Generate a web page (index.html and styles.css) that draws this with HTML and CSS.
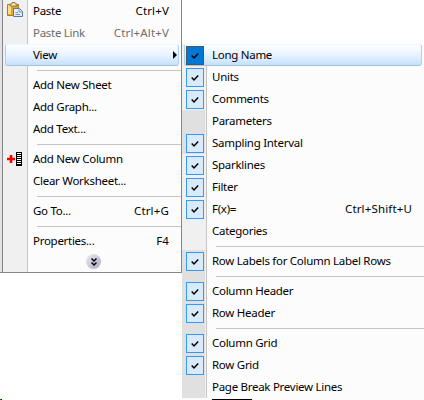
FILE: index.html
```
<!DOCTYPE html>
<html lang="en">
<head>
<meta charset="utf-8">
<title>Worksheet menu</title>
<link rel="stylesheet" href="styles.css">
</head>
<body>
<svg class="defs" width="0" height="0"><symbol id="check" viewBox="0 0 8 8"><path d="M0.7 3.6 3 6 7.2 1.500" fill="none" stroke="#000" stroke-width="1.500"/></symbol></svg>
<div class="desktop">
  <nav class="menu context">
    <div class="item"><span class="slot"><svg class="paste" width="16" height="16" viewBox="0 0 16 16"><path d="M.5 2.500h11v11H.5z" fill="#e0a52c" stroke="#b57a18"/><path d="M1 3h3v9H1z" fill="#fbdc86"/><path d="M3 4V2h2V.5h3V2h2v2z" fill="#f5eccb" stroke="#7d6228" stroke-width=".8"/><path d="M6.500 6.500h6l3 3v5h-9z" fill="#e3edfa" stroke="#607896"/><path d="M12 6.500V10h3.500M8.500 10.500H11M8.500 12.500H13" fill="none" stroke="#7893b8"/></svg></span><span class="label">Paste</span><span class="key">Ctrl+V</span></div>
    <div class="item disabled"><span class="slot"></span><span class="label">Paste Link</span><span class="key">Ctrl+Alt+V</span></div>
    <div class="item active"><span class="slot"></span><span class="label">View</span><svg class="arrow" width="4" height="8" viewBox="0 0 4 8"><path d="M0 0 4 4 0 8z"/></svg></div>
    <div class="sep"></div>
    <div class="item"><span class="slot"></span><span class="label">Add New Sheet</span></div>
    <div class="item"><span class="slot"></span><span class="label">Add Graph...</span></div>
    <div class="item"><span class="slot"></span><span class="label">Add Text...</span></div>
    <div class="sep"></div>
    <div class="item"><span class="slot"><svg class="column" width="15" height="14" viewBox="0 0 15 14"><path d="M0 5.700h8v2.600H0zM2.700 3h2.600v8H2.700z" fill="#f00"/><path d="M9 0h6v14H9z"/><path d="M10 1h4v1h-4zM10 3h4v1h-4zM10 5h4v1h-4zM10 7h4v1h-4zM10 9h4v1h-4zM10 11h4v1h-4z" fill="#fff"/></svg></span><span class="label">Add New Column</span></div>
    <div class="item"><span class="slot"></span><span class="label">Clear Worksheet...</span></div>
    <div class="sep"></div>
    <div class="item"><span class="slot"></span><span class="label">Go To...</span><span class="key">Ctrl+G</span></div>
    <div class="sep"></div>
    <div class="item"><span class="slot"></span><span class="label">Properties...</span><span class="key">F4</span></div>
    <div class="more"><span class="ball"><svg width="6" height="8" viewBox="0 0 6 8"><path d="M.5.5 3 3 5.500.5M.5 4.500 3 7 5.500 4.500" fill="none" stroke="#000" stroke-width="1.500"/></svg></span></div>
  </nav>
  <nav class="menu submenu">
    <div class="item active"><span class="slot"><span class="box"><svg width="8" height="8"><use href="#check"/></svg></span></span><span class="label">Long Name</span></div>
    <div class="item"><span class="slot"><span class="box"><svg width="8" height="8"><use href="#check"/></svg></span></span><span class="label">Units</span></div>
    <div class="item"><span class="slot"><span class="box"><svg width="8" height="8"><use href="#check"/></svg></span></span><span class="label">Comments</span></div>
    <div class="item dim"><span class="slot"></span><span class="label">Parameters</span></div>
    <div class="item dim"><span class="slot"><span class="box"><svg width="8" height="8"><use href="#check"/></svg></span></span><span class="label">Sampling Interval</span></div>
    <div class="item"><span class="slot"><span class="box"><svg width="8" height="8"><use href="#check"/></svg></span></span><span class="label">Sparklines</span></div>
    <div class="item"><span class="slot"><span class="box"><svg width="8" height="8"><use href="#check"/></svg></span></span><span class="label">Filter</span></div>
    <div class="item"><span class="slot"><span class="box"><svg width="8" height="8"><use href="#check"/></svg></span></span><span class="label">F(x)=</span><span class="key">Ctrl+Shift+U</span></div>
    <div class="item"><span class="slot"></span><span class="label">Categories</span></div>
    <div class="sep"></div>
    <div class="item dim"><span class="slot"><span class="box"><svg width="8" height="8"><use href="#check"/></svg></span></span><span class="label">Row Labels for Column Label Rows</span></div>
    <div class="sep dim"></div>
    <div class="item dim"><span class="slot"><span class="box"><svg width="8" height="8"><use href="#check"/></svg></span></span><span class="label">Column Header</span></div>
    <div class="item dim"><span class="slot"><span class="box"><svg width="8" height="8"><use href="#check"/></svg></span></span><span class="label">Row Header</span></div>
    <div class="sep dim"></div>
    <div class="item dim"><span class="slot"><span class="box"><svg width="8" height="8"><use href="#check"/></svg></span></span><span class="label">Column Grid</span></div>
    <div class="item dim"><span class="slot"><span class="box"><svg width="8" height="8"><use href="#check"/></svg></span></span><span class="label">Row Grid</span></div>
    <div class="item dim"><span class="slot"></span><span class="label">Page Break Preview Lines</span></div>
    <div class="edge"></div>
  </nav>
  <i class="speck"></i>
</div>
</body>
</html>
```
FILE: styles.css
```
* { box-sizing: border-box; }
body { margin: 0; background: #fff; }
.defs { position: absolute; }
.desktop {
  position: relative;
  display: flex;
  align-items: flex-start;
  width: 424px;
  height: 400px;
  overflow: hidden;
  font: 11.5px/22px "Noto Sans", "Open Sans", sans-serif;
  color: #000;
}
.menu { --gutter: #f0f0f0; background: #fcfcfc; }
.context {
  width: 182px;
  height: 273px;
  border: solid #868686;
  border-width: 0 1px 1px 0;
  box-shadow: inset 2px 0 #e2dfe6, inset 3px 0 #868686;
  padding-left: 3px;
}
.submenu { width: 242px; height: 356px; margin-top: 44px; }
.item, .sep, .more { display: flex; position: relative; }
.item { height: 22px; }
.item, .sep, .more {
  background: linear-gradient(to right, var(--gutter) 24px, #c5c5c5 24px 25px, transparent 25px);
}
.submenu .dim {
  background: linear-gradient(to right, #e0e0e0 23px, #f0f0f0 23px 24px, #c5c5c5 24px 25px, transparent 25px);
}
.slot { flex: 0 0 24px; display: flex; }
.label { flex: 1; padding-left: 6px; white-space: nowrap; letter-spacing: -0.28px; }
.key { padding-right: 12px; white-space: nowrap; letter-spacing: 0.15px; }
.disabled { color: #6d6d6d; }
.sep { height: 8px; }
.sep::after { content: ""; height: 1px; margin: 4px 0 0 34px; flex: 1; background: #c5c5c5; }
.active::before {
  content: "";
  position: absolute;
  inset: 0 2px;
  border: 1px solid #aecff0;
  border-top-color: #eef5fc;
  border-bottom-color: #a3c3e2;
  border-radius: 3px;
  background: linear-gradient(#fdfeff, #e7f3ff 50%, #c5e1fc);
}
.active > * { position: relative; }
.arrow { margin: 7px 4px 0 0; }
.paste { margin: 2px 0 0 4px; }
.column { margin: 4px 0 0 4px; }
.box {
  display: flex;
  align-items: center;
  justify-content: center;
  width: 18px;
  height: 19px;
  margin: 2px 0 0 4px;
  border: 1px solid #3399ff;
  background: #d9eafa;
}
.active .box { background: #0078d7; border-color: #4b5560; }
.more { height: 20px; }
.ball {
  display: flex;
  align-items: center;
  justify-content: center;
  width: 15px;
  height: 15px;
  margin: 2px 0 0 83px;
  border-radius: 50%;
  background: linear-gradient(135deg, #eeeef4, #a9a9c2);
}
.edge { width: 40px; height: 1px; margin: 1px 0 0 30px; background: #000; }
.speck { position: absolute; left: 0; top: 399px; width: 2px; height: 1px; background: linear-gradient(to right, #008000 1px, #000 1px); }
```
